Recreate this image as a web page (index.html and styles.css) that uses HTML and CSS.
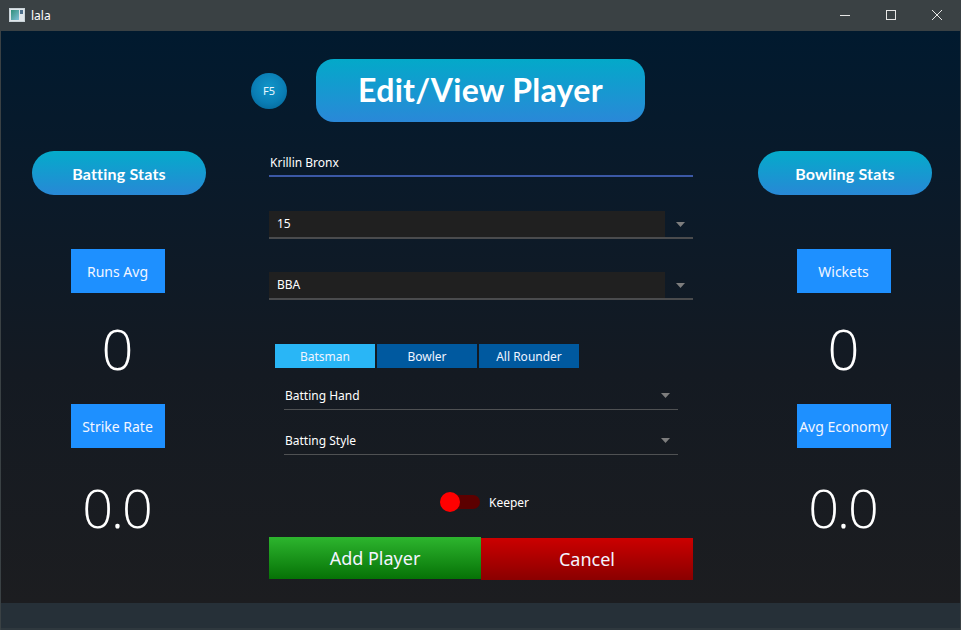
FILE: index.html
```html
<!DOCTYPE html>
<html>
<head>
<meta charset="utf-8">
<link rel="stylesheet" href="styles.css">
</head>
<body>
<div class="window">
  <div class="titlebar">
    <svg class="app-icon" width="16" height="14" viewBox="0 0 16 14">
      <defs>
        <linearGradient id="ig" x1="0" y1="0" x2="1" y2="1">
          <stop offset="0" stop-color="#2f8f7a"/>
          <stop offset="1" stop-color="#7fc0d8"/>
        </linearGradient>
      </defs>
      <rect x="0.5" y="0.5" width="15" height="13" fill="#dfe6ea" stroke="#c9d3d8"/>
      <rect x="2" y="2" width="8" height="10" fill="url(#ig)"/>
      <rect x="11" y="2" width="3" height="4" fill="#4e6f8a"/>
    </svg>
    <span class="title">lala</span>
    <div class="controls">
      <svg width="46" height="31" viewBox="0 0 46 31"><line x1="18" y1="15.5" x2="28" y2="15.5" stroke="#e6e6e6" stroke-width="1"/></svg>
      <svg width="46" height="31" viewBox="0 0 46 31"><rect x="18.5" y="10.5" width="9" height="9" fill="none" stroke="#e6e6e6" stroke-width="1"/></svg>
      <svg width="46" height="31" viewBox="0 0 46 31"><path d="M18 10 L28 20 M28 10 L18 20" stroke="#e6e6e6" stroke-width="1"/></svg>
    </div>
  </div>

  <div class="main">
    <div class="side">
      <div class="pill">Batting Stats</div>
      <div class="stat-label">Runs Avg</div>
      <div class="big">0</div>
      <div class="stat-label">Strike Rate</div>
      <div class="big dec">0.0</div>
    </div>

    <div class="center">
      <div class="header-row">
        <div class="f5">F5</div>
        <div class="header">Edit/View Player</div>
      </div>

      <div class="textfield">Krillin Bronx</div>

      <div class="combo first">
        <div class="combo-box">15</div>
        <svg class="arrow" width="9" height="5" viewBox="0 0 9 5"><path d="M0 0 H9 L4.5 5 Z" fill="#7d7d7d"/></svg>
      </div>
      <div class="combo">
        <div class="combo-box">BBA</div>
        <svg class="arrow" width="9" height="5" viewBox="0 0 9 5"><path d="M0 0 H9 L4.5 5 Z" fill="#7d7d7d"/></svg>
      </div>

      <div class="toggles">
        <div class="tbtn active">Batsman</div>
        <div class="tbtn">Bowler</div>
        <div class="tbtn">All Rounder</div>
      </div>

      <div class="select first">
        <span>Batting Hand</span>
        <svg class="arrow" width="9" height="5" viewBox="0 0 9 5"><path d="M0 0 H9 L4.5 5 Z" fill="#7d7d7d"/></svg>
      </div>
      <div class="select">
        <span>Batting Style</span>
        <svg class="arrow" width="9" height="5" viewBox="0 0 9 5"><path d="M0 0 H9 L4.5 5 Z" fill="#7d7d7d"/></svg>
      </div>

      <div class="keeper">
        <div class="switch"><div class="knob"></div></div>
        <span>Keeper</span>
      </div>

      <div class="actions">
        <div class="btn add">Add Player</div>
        <div class="btn cancel">Cancel</div>
      </div>
    </div>

    <div class="side">
      <div class="pill">Bowling Stats</div>
      <div class="stat-label">Wickets</div>
      <div class="big">0</div>
      <div class="stat-label">Avg Economy</div>
      <div class="big dec">0.0</div>
    </div>
  </div>

  <div class="statusbar"></div>
</div>
</body>
</html>
```

FILE: styles.css
```css
* { box-sizing: border-box; }
html, body { margin: 0; padding: 0; }
body {
  width: 961px;
  height: 630px;
  overflow: hidden;
  background: #3a4144;
  font-family: "Noto Sans", "Open Sans", sans-serif;
  color: #fff;
}
.window {
  width: 961px;
  height: 630px;
  display: flex;
  flex-direction: column;
  background: #3a4144;
}
.titlebar {
  height: 31px;
  flex: 0 0 31px;
  display: flex;
  align-items: center;
  background: #3a4144;
  padding-left: 9px;
}
.app-icon { display: block; margin-top: -1px; }
.title {
  font-family: "Noto Sans", sans-serif;
  font-size: 12px;
  color: #ffffff;
  margin-left: 6px;
  margin-top: -1px;
}
.controls {
  margin-left: auto;
  display: flex;
  margin-right: 1px;
}
.controls svg { display: block; }

.main {
  flex: 1;
  margin: 0 1px;
  display: grid;
  grid-template-columns: 233px 1fr 233px;
  background: linear-gradient(180deg, #011a2f 0%, #0b1a29 30%, #141a22 60%, #1c1d20 100%);
}

.side {
  display: flex;
  flex-direction: column;
  align-items: center;
  padding-top: 120px;
}
.pill {
  width: 174px;
  height: 44px;
  border-radius: 22px;
  margin-left: 3px;
  background: linear-gradient(180deg, #04abca 0%, #2888d6 100%);
  display: flex;
  align-items: center;
  justify-content: center;
  font-family: "Lato", sans-serif;
  font-weight: 700;
  font-size: 16px;
  letter-spacing: 0.2px;
}
.stat-label {
  width: 94px;
  height: 44px;
  background: #1e90ff;
  display: flex;
  align-items: center;
  justify-content: center;
  font-size: 14px;
  white-space: nowrap;
  color: #f2f6ff;
  margin-top: 54px;
}
.big {
  font-family: "Open Sans", sans-serif;
  font-weight: 300;
  font-size: 56px;
  line-height: 60px;
  height: 60px;
  margin-top: 25px;
  margin-bottom: 0;
}
.big + .stat-label { margin-top: 26px; }
.big.dec {
  margin-top: 29px;
  font-size: 54px;
  letter-spacing: -2px;
  padding-right: 2px;
}

.center {
  display: flex;
  flex-direction: column;
  padding: 0 34px 0 35px;
}
.header-row {
  display: flex;
  align-items: center;
  margin-top: 28px;
  margin-left: -18px;
}
.f5 {
  width: 36px;
  height: 36px;
  border-radius: 50%;
  background: radial-gradient(circle at 50% 40%, #1196c9 0%, #0a7eb5 55%, #03608f 100%);
  display: flex;
  align-items: center;
  justify-content: center;
  font-size: 11px;
  color: #eaf6ff;
}
.header {
  margin-left: 29px;
  width: 329px;
  height: 63px;
  border-radius: 18px;
  background: linear-gradient(180deg, #03a9c9 0%, #2a88d8 100%);
  display: flex;
  align-items: center;
  justify-content: center;
  font-family: "Lato", sans-serif;
  font-weight: 700;
  font-size: 32px;
  letter-spacing: 0.3px;
  padding-bottom: 2px;
}

.textfield {
  margin-top: 28px;
  height: 27px;
  border-bottom: 2px solid #3b58a6;
  font-size: 12px;
  line-height: 25px;
  padding-left: 1px;
  color: #ffffff;
}

.combo {
  display: flex;
  align-items: center;
  height: 28px;
  border-bottom: 2px solid #4a4b4d;
  margin-top: 33px;
}
.combo.first { margin-top: 34px; }
.combo-box {
  width: 396px;
  height: 26px;
  background: #202020;
  font-size: 12px;
  line-height: 26px;
  padding-left: 8px;
}
.combo .arrow { margin-left: 11px; }

.toggles {
  display: flex;
  gap: 2px;
  margin-top: 44px;
  margin-left: 6px;
}
.tbtn {
  width: 100px;
  height: 24px;
  background: #00599f;
  font-size: 12px;
  display: flex;
  align-items: center;
  justify-content: center;
  color: #f0f4ff;
}
.tbtn.active { background: #29b6f6; }

.select {
  margin: 18px 15px 0 15px;
  height: 27px;
  border-bottom: 1px solid #4f5153;
  display: flex;
  align-items: center;
  font-size: 12px;
  padding-left: 1px;
  padding-bottom: 1px;
}
.select.first { margin-top: 15px; }
.select .arrow { margin-left: auto; margin-right: 8px; }

.keeper {
  display: flex;
  align-items: center;
  margin-top: 37px;
  margin-left: 171px;
  height: 20px;
}
.switch {
  position: relative;
  width: 40px;
  height: 14px;
  border-radius: 7px;
  background: #5c0000;
}
.knob {
  position: absolute;
  left: 0;
  top: -3px;
  width: 20px;
  height: 20px;
  border-radius: 50%;
  background: #ff0000;
}
.keeper span {
  font-size: 12px;
  margin-left: 9px;
}

.actions {
  display: flex;
  align-items: flex-start;
  margin-top: 25px;
}
.btn {
  height: 42px;
  display: flex;
  align-items: center;
  justify-content: center;
  font-size: 18px;
  color: #f4f4ff;
}
.btn.add {
  width: 212px;
  background: linear-gradient(180deg, #2db52e 0%, #067206 100%);
}
.btn.cancel {
  flex: 1;
  margin-top: 1px;
  background: linear-gradient(180deg, #cc0000 0%, #8a0000 100%);
}

.statusbar {
  height: 27px;
  flex: 0 0 27px;
  margin: 0 1px 0 1px;
  background: #263038;
  border-bottom: 2px solid #2f383e;
}
```
